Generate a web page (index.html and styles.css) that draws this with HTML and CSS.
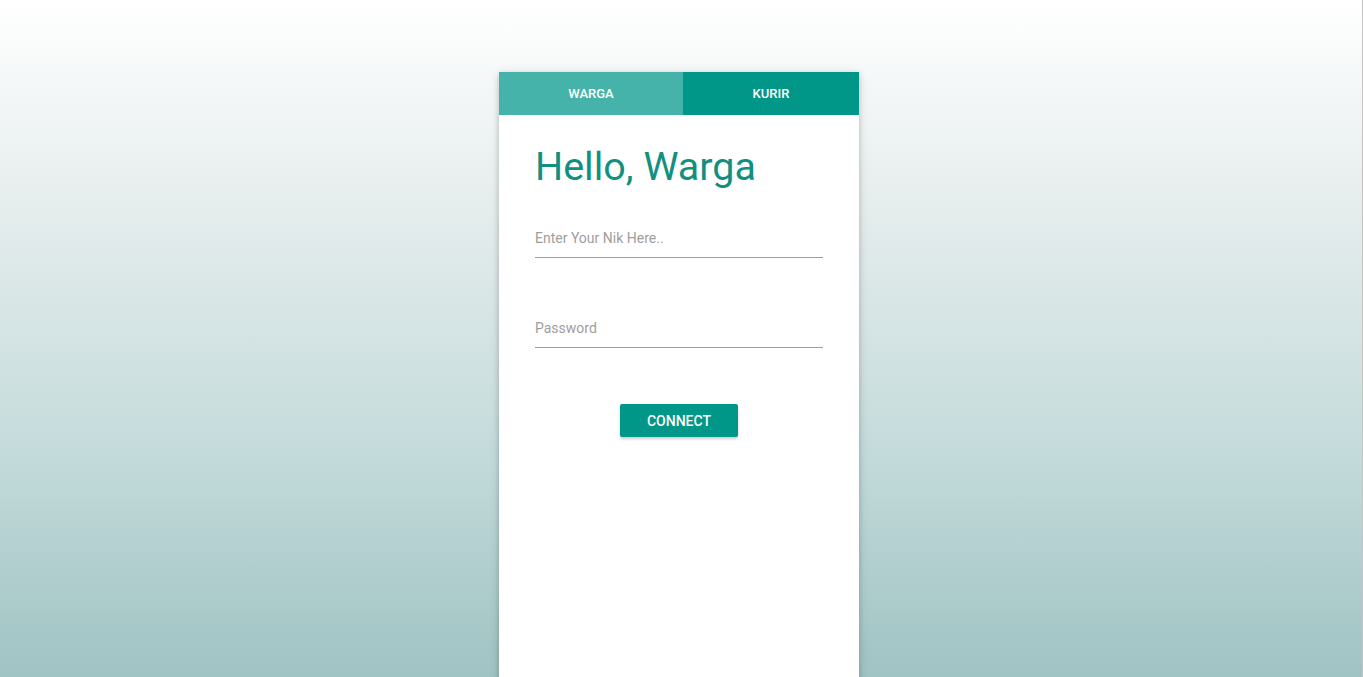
FILE: index.html
```html
<!DOCTYPE html>
<html lang="id">
<head>
<meta charset="utf-8">
<title>Login</title>
<link rel="stylesheet" href="styles.css">
</head>
<body>
<div class="card">
  <div class="tabs">
    <div class="tab tab-active">WARGA</div>
    <div class="tab tab-other">KURIR</div>
  </div>
  <div class="content">
    <h1 class="title">Hello, Warga</h1>
    <div class="field">
      <input class="input" type="text" placeholder="Enter Your Nik Here..">
    </div>
    <div class="field field-second">
      <input class="input" type="password" placeholder="Password">
    </div>
    <div class="actions">
      <button class="btn" type="button">CONNECT</button>
    </div>
  </div>
</div>
</body>
</html>
```
FILE: styles.css
```css
html {
  height: 100%;
}
body {
  margin: 0;
  height: 100vh;
  overflow: hidden;
  font-family: Roboto, "Liberation Sans", sans-serif;
  background: linear-gradient(to bottom, #ffffff 0%, #e6eded 30%, #c6dcdc 65%, #a0c3c3 100%);
  border-right: 1px solid #c4c4c4;
  padding-right: 4px;
  box-sizing: border-box;
}
.card {
  width: 360px;
  margin: 72px auto 0;
  min-height: 640px;
  background: #fff;
  box-shadow: 0 2px 5px rgba(0,0,0,0.16), 0 2px 10px rgba(0,0,0,0.12);
}
.tabs {
  display: flex;
  height: 43px;
}
.tab {
  display: flex;
  align-items: center;
  justify-content: center;
  color: #fff;
  font-size: 13px;
  font-weight: 500;
}
.tab-active {
  width: 184px;
  background: #45b3a9;
}
.tab-other {
  flex: 1;
  background: #009688;
}
.content {
  padding: 24px 36px 0;
}
.title {
  margin: 0;
  font-size: 39.5px;
  font-weight: 400;
  line-height: 56px;
  color: #12907f;
}
.field {
  margin-top: 23px;
}
.field-second {
  margin-top: 50px;
}
.input {
  display: block;
  width: 100%;
  box-sizing: border-box;
  height: 40px;
  padding: 0;
  border: none;
  border-bottom: 1px solid #9e9e9e;
  outline: none;
  background: transparent;
  font-family: Roboto, "Liberation Sans", sans-serif;
  font-size: 14px;
  color: #333;
}
.input::placeholder {
  color: #9e9e9e;
}
.actions {
  display: flex;
  justify-content: center;
  margin-top: 56px;
}
.btn {
  width: 118px;
  height: 33px;
  border: none;
  border-radius: 2px;
  background: #009688;
  color: #fff;
  font-family: Roboto, "Liberation Sans", sans-serif;
  font-size: 14px;
  font-weight: 500;
  box-shadow: 0 2px 3px rgba(0,0,0,0.2);
  padding: 0;
}
```
